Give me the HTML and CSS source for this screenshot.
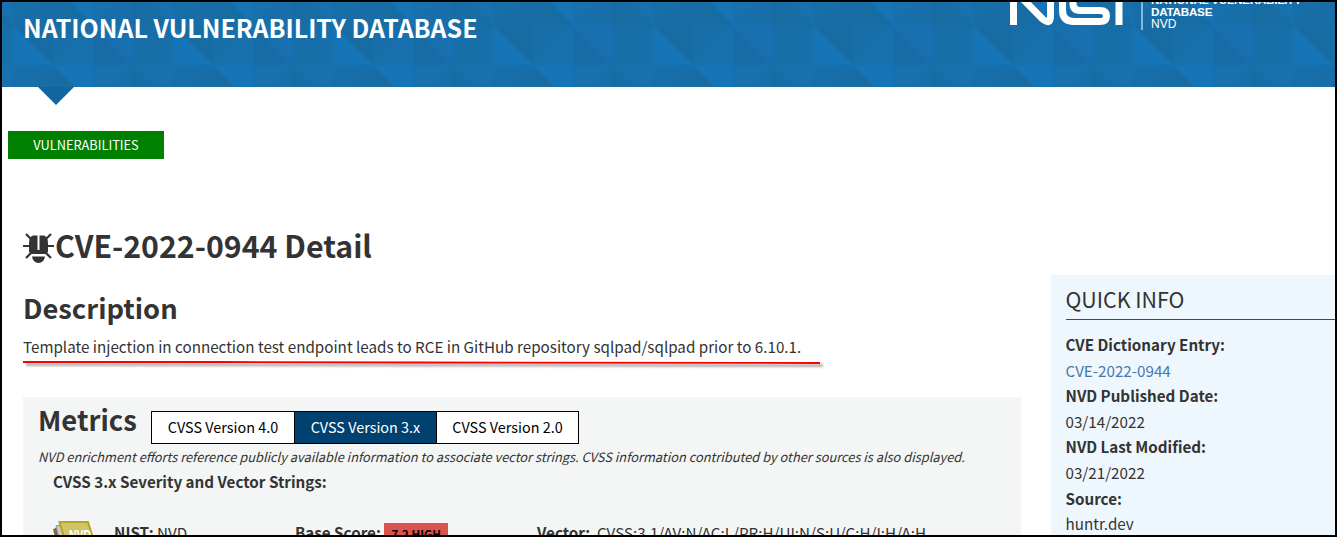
FILE: index.html
```html
<!DOCTYPE html>
<html lang="en">
<head>
<meta charset="utf-8">
<title>NVD - CVE-2022-0944</title>
<link rel="stylesheet" href="styles.css">
</head>
<body>
<div class="frame">
  <header class="banner">
    <svg class="pattern" width="1333" height="85" aria-hidden="true">
      <defs>
        <pattern id="tri" x="11" y="-17" width="160" height="80" patternUnits="userSpaceOnUse">
          <rect width="160" height="80" fill="#1870ac"/>
          <path d="M0 0H40L0 40Z" fill="#176faa"/><path d="M40 0V40H0Z" fill="#186da7"/>
          <path d="M40 0H80V40Z" fill="#1474b5"/><path d="M40 0V40H80Z" fill="#186ca4"/>
          <path d="M80 0H120L80 40Z" fill="#1870ac"/><path d="M120 0V40H80Z" fill="#176ea8"/>
          <path d="M120 0H160V40Z" fill="#1970af"/><path d="M120 0V40H160Z" fill="#186ca4"/>
          <path d="M0 40V80H40Z" fill="#1474b5"/><path d="M0 40H40V80Z" fill="#186ca4"/>
          <path d="M40 40H80L40 80Z" fill="#186ea8"/><path d="M80 40V80H40Z" fill="#1870ac"/>
          <path d="M80 40V80H120Z" fill="#186ca5"/><path d="M80 40H120V80Z" fill="#1970b0"/>
          <path d="M120 40H160L120 80Z" fill="#176ea8"/><path d="M160 40V80H120Z" fill="#1870ab"/>
        </pattern>
      </defs>
      <rect width="1333" height="85" fill="url(#tri)"/>
    </svg>
    <h1 class="site-title">NATIONAL VULNERABILITY DATABASE</h1>
    <div class="logo">
      <svg class="nist" width="113" height="26" viewBox="0 0 113 26" fill="none" stroke="#fff" stroke-width="7">
        <path d="M3.500 23V-3M10 -6L32 16.500Q40.500 24 40.500 14V-3"/>
        <path d="M52.500 -3V8Q52.500 19.500 64 19.500H90Q96.500 19.500 96.500 14Q96.500 8.500 90 8.500H70Q63 8.500 63 1V-3"/>
        <path d="M109 -3V23"/>
      </svg>
      <div class="logo-text"><b>NATIONAL VULNERABILITY</b><b>DATABASE</b><span>NVD</span></div>
    </div>
  </header>
  <div class="pointer"></div>
  <a class="tag">VULNERABILITIES</a>
  <div class="columns">
    <main class="main">
      <h2 class="title"><svg class="bug" width="31" height="30" viewBox="0 0 31 30"><g fill="none" stroke="#333" stroke-width="2.200"><path d="M3 1L9 7M28 1L22 7M0 13H8M23 13H31M3 25L9 19M28 25L22 19"/></g><path fill="#333" d="M6 19V10Q6 4 10 2.500H14.500V17H16.500V2.500H21Q25 4 25 10V19L22 21H9ZM9 23.500H22Q21 30 15.500 30T9 23.500Z"/></svg><span class="t-cve">CVE-2022-0944 Detail</span></h2>
      <h3 class="h-desc"><span>Description</span></h3>
      <p class="desc"><span>Template injection in connection test endpoint leads to RCE in GitHub repository sqlpad/sqlpad prior to 6.10.1.</span></p>
      <svg class="underline" width="804" height="10"><path class="shade" d="M3 4.500L400 5L800 5.500"/><path d="M0 2L199 2L398 2.500L797 3" stroke="red" stroke-width="1.800" fill="none"/></svg>
      <section class="metrics">
        <div class="metrics-head"><h3 class="h-met">Metrics</h3>
          <div class="tabs"><span class="tab">CVSS Version 4.0</span><span class="tab on">CVSS Version 3.x</span><span class="tab">CVSS Version 2.0</span></div></div>
        <p class="note"><i>NVD enrichment efforts reference publicly available information to associate vector strings. CVSS information contributed by other sources is also displayed.</i></p>
        <p class="sev"><b>CVSS 3.x Severity and Vector Strings:</b></p>
        <div class="score-row">
          <svg class="nvd" width="46" height="30" viewBox="0 0 46 30"><path d="M0 8L6 6L14 30H5Z" fill="#8a6340"/><path d="M3 5L9 4L16 30H9Z" fill="#ccc" stroke="#888"/><path d="M6.500 1H35L44 30H15Z" fill="#d0c467" stroke="#b5a524" stroke-width="2"/><text class="nvd-text" x="16" y="18.500" textLength="22" lengthAdjust="spacingAndGlyphs">NVD</text></svg>
          <span class="src"><b>NIST:</b> NVD</span>
          <span class="base"><b>Base Score:</b> <span class="high">7.2 HIGH</span></span>
          <span class="vec"><b>Vector:</b>&nbsp; CVSS:3.1/AV:N/AC:L/PR:H/UI:N/S:U/C:H/I:H/A:H</span>
        </div>
      </section>
    </main>
    <aside class="info">
      <h4 class="info-title"><span>QUICK INFO</span></h4>
      <dl class="facts"><dt>CVE Dictionary Entry:</dt><dd><a>CVE-2022-0944</a></dd><dt>NVD Published Date:</dt><dd>03/14/2022</dd><dt>NVD Last Modified:</dt><dd>03/21/2022</dd><dt>Source:</dt><dd>huntr.dev</dd></dl>
    </aside>
  </div>
</div>
</body>
</html>
```
FILE: styles.css
```css
*{box-sizing:border-box;margin:0;padding:0}
body{font-family:"Noto Sans CJK SC",sans-serif;font-size:15.2px;color:#333;background:#fff}
.frame{width:1337px;height:537px;border:2px solid #000;overflow:hidden;white-space:nowrap}
.banner{position:relative;height:85px;display:flex;justify-content:space-between;color:#fff;overflow:hidden}
.pattern{position:absolute;left:0;top:0}
.site-title{position:relative;margin-left:21px;font-size:24.95px;line-height:36px;padding-top:7px}
.logo{position:relative;display:flex;width:325px}
.nist{flex:none}
.logo-text{margin-left:18px;height:28px;border-left:2px solid #88b6d8;padding-left:8px;font:12px/12px "Liberation Sans",Arial,sans-serif;display:flex;flex-direction:column;justify-content:flex-end}
.logo-text b{font-size:11.7px;letter-spacing:-.25px}
.pointer{width:36px;height:18px;margin-left:36px;background:#11659d;clip-path:polygon(0 0,100% 0,50% 100%)}
.tag{display:block;width:156px;height:28px;margin:26px 0 0 6px;background:#008000;color:#fff;font-size:12.8px;line-height:28px;text-align:center}
.columns{display:flex;height:380px}
.main{width:998px;margin-left:21px;padding-top:67px}
.title{display:flex;align-items:center;height:42px;font-size:30.3px;line-height:42px}
.bug{flex:none;margin-top:2px}
.t-cve{margin:-5px 0 0 1px}
.h-desc{font-size:27.3px;line-height:40px;margin-top:19px}
.desc{line-height:24px;margin-top:7px}
.underline{display:block;margin-top:2px}
.shade{fill:none;stroke:#888;stroke-width:3px;opacity:.65;filter:blur(1px)}
.metrics{margin-top:27px;padding:14px 15px;background:#f3f6f5;height:180px}
.metrics-head{display:flex;height:33px}
.h-met{font-size:27.4px;line-height:16px;width:113px}
.tabs{display:flex;border:1px solid #000;height:33px}
.tab{width:142px;text-align:center;line-height:30px;font-size:14.4px;color:#000;background:#fff}
.tab+.tab{border-left:1px solid #000}
.tab.on{background:#004170;color:#fff}
.note{font-size:12.83px;line-height:22px;margin-top:2px}
.sev{margin-left:15px;line-height:24px;margin-top:1px}
.score-row{display:flex;margin:27px 0 0 15px;line-height:24px}
.nvd{flex:none;width:46px;margin-top:1px}
.src{width:181px;margin-left:15px}
.base{width:242px}
.high{display:inline-block;width:64px;height:22px;line-height:23px;background:#d9534f;color:#000;text-align:center;font-size:11.5px;font-weight:bold}
.nvd-text{font:bold 14px "Liberation Sans",Arial,sans-serif;fill:#fff}
.info{margin:116px 0 0 30px;padding:8px 0 0 14.5px;width:284px;background:#eff7fe}
.info-title{font-weight:400;font-size:21.4px;line-height:32px;height:37px;border-bottom:1px solid #0b5a94}
.facts{margin-top:12px;line-height:25.6px}
.facts dt{font-weight:bold}
.facts dd{line-height:25.6px}
.facts a{color:#4a77a8}
```
